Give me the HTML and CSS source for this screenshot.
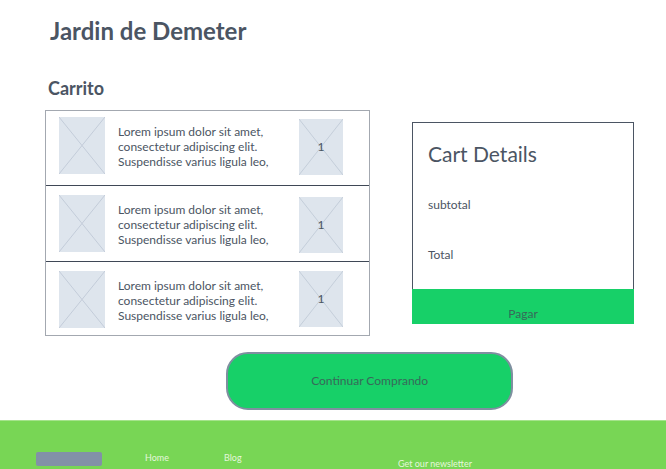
FILE: index.html
```html
<!DOCTYPE html>
<html lang="es">
<head>
<meta charset="utf-8">
<meta name="viewport" content="width=device-width, initial-scale=1">
<title>Jardin de Demeter</title>
<link rel="stylesheet" href="styles.css">
</head>
<body>
<svg class="defs" aria-hidden="true">
  <symbol id="placeholder" viewBox="0 0 46 57" preserveAspectRatio="none">
    <path d="M0 0L46 57M46 0L0 57"/>
  </symbol>
</svg>
<header class="site-header">
  <h1 class="brand">Jardin de Demeter</h1>
</header>
<main class="main">
  <h2 class="page-title">Carrito</h2>
  <div class="columns">
    <ul class="cart">
      <li class="item">
        <svg class="thumb" aria-hidden="true"><use href="#placeholder"/></svg>
        <p class="description">Lorem ipsum dolor sit amet, consectetur adipiscing elit. Suspendisse varius ligula leo,</p>
        <div class="quantity"><svg class="quantity-box" aria-hidden="true"><use href="#placeholder"/></svg><span class="quantity-value">1</span></div>
      </li>
      <li class="item">
        <svg class="thumb" aria-hidden="true"><use href="#placeholder"/></svg>
        <p class="description">Lorem ipsum dolor sit amet, consectetur adipiscing elit. Suspendisse varius ligula leo,</p>
        <div class="quantity"><svg class="quantity-box" aria-hidden="true"><use href="#placeholder"/></svg><span class="quantity-value">1</span></div>
      </li>
      <li class="item">
        <svg class="thumb" aria-hidden="true"><use href="#placeholder"/></svg>
        <p class="description">Lorem ipsum dolor sit amet, consectetur adipiscing elit. Suspendisse varius ligula leo,</p>
        <div class="quantity"><svg class="quantity-box" aria-hidden="true"><use href="#placeholder"/></svg><span class="quantity-value">1</span></div>
      </li>
    </ul>
    <section class="details">
      <div class="details-body">
        <h2 class="details-title">Cart Details</h2>
        <p class="details-line">subtotal</p>
        <p class="details-line">Total</p>
      </div>
      <button class="pay" type="button">Pagar</button>
    </section>
  </div>
  <button class="continue" type="button">Continuar Comprando</button>
</main>
<footer class="footer">
  <div class="footer-logo"></div>
  <a class="footer-link" href="#">Home</a>
  <a class="footer-link" href="#">Blog</a>
  <p class="newsletter">Get our newsletter</p>
</footer>
</body>
</html>
```
FILE: styles.css
```css
* {
  box-sizing: border-box;
}

body {
  margin: 0;
  min-height: 100vh;
  display: flex;
  flex-direction: column;
  background: #fff;
  color: #4b5563;
  font: 12px/16px Lato, "Liberation Sans", sans-serif;
}

h1, h2, p, ul {
  margin: 0;
  padding: 0;
}

button {
  font: inherit;
  color: #37695a;
  background: #17d068;
}

.defs {
  position: absolute;
  width: 0;
  height: 0;
}

.site-header {
  padding: 16px 50px 0;
}

.brand {
  font-size: 24px;
  line-height: 30px;
}

.page-title {
  padding: 30px 48px 10px;
  font-size: 18px;
  line-height: 24px;
}

.columns {
  display: grid;
  grid-template-columns: 325fr 222fr;
  gap: 42px;
  align-items: start;
  padding: 0 32px 0 45px;
}

.cart {
  list-style: none;
  border: 1px solid #a3a8b0;
}

.item {
  display: grid;
  grid-template-columns: 46px 1fr 44px;
  gap: 13px;
  align-items: start;
  padding: 6px 26px 10px 13px;
}

.item + .item {
  padding-top: 9px;
  padding-bottom: 8px;
  border-top: 1px solid #3f4856;
}

.item:last-child {
  padding-bottom: 7px;
}

.thumb,
.quantity-box {
  display: block;
  width: 100%;
  height: 57px;
  background: #dee5ed;
  stroke: #c3ccd9;
  fill: none;
}

.description {
  max-width: 160px;
  margin-top: 7px;
  line-height: 15px;
}

.quantity {
  display: grid;
  place-items: center;
  margin-top: 2px;
}

.item:last-child .quantity {
  margin-top: 0;
}

.quantity-box,
.quantity-value {
  grid-area: 1 / 1;
}

.quantity-box {
  height: 56px;
}

.details {
  margin-top: 12px;
}

.details-body {
  padding: 15px 15px 26px;
  border: 1px solid #4b5563;
  border-bottom: 0;
}

.details-title {
  font-size: 21px;
  line-height: 32px;
  font-weight: 400;
}

.details-line {
  margin-top: 27px;
}

.details-line + .details-line {
  margin-top: 34px;
}

.pay {
  display: block;
  width: 100%;
  padding: 17px 0 2px;
  border: 0;
}

.continue {
  display: block;
  width: 43%;
  height: 58px;
  margin: 16px 0 10px 34%;
  border: 2px solid #7f8fa0;
  border-radius: 22px;
}

.footer {
  flex: 1;
  display: grid;
  grid-template-columns: 66px 36px 131px 1fr;
  column-gap: 43px;
  align-items: start;
  padding: 31px 32px 0 36px;
  border-top: 1px solid #a5e38c;
  background: #78d655;
  color: #e4f7dc;
  font-size: 9px;
  line-height: 10px;
}

.footer-logo {
  height: 14px;
  border-radius: 2px;
  background: #8291a7;
}

.footer-link {
  padding-top: 1px;
  color: inherit;
  text-decoration: none;
}

.newsletter {
  padding-top: 7px;
}
```
